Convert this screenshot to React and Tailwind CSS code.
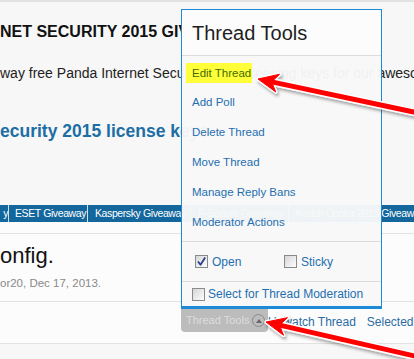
import React from "react";

function CheckBox({ checked }) {
  return (
    <svg width="13" height="13" viewBox="0 0 13 13" className="shrink-0">
      <defs>
        <linearGradient id="cbg" x1="0" y1="0" x2="1" y2="1">
          <stop offset="0" stopColor="#d4d4d4" />
          <stop offset="1" stopColor="#ffffff" />
        </linearGradient>
      </defs>
      <rect x="0.5" y="0.5" width="12" height="12" fill="url(#cbg)" stroke="#8a8a8a" />
      {checked && (
        <path d="M3 6.5 L5.5 9.8 L10.2 2.6" fill="none" stroke="#2b3f8f" strokeWidth="1.8" strokeLinejoin="round" />
      )}
    </svg>
  );
}

function Arrows() {
  return (
    <svg className="absolute inset-0 pointer-events-none" width="414" height="359" viewBox="0 0 414 359">
      <defs>
        <filter id="sh" x="-20%" y="-50%" width="140%" height="200%">
          <feDropShadow dx="1.5" dy="2.5" stdDeviation="1.5" floodColor="#000" floodOpacity="0.35" />
        </filter>
      </defs>
      <g filter="url(#sh)">
        <line x1="271.7" y1="81.9" x2="430" y2="115.5" stroke="#fff" strokeWidth="8" />
        <polygon points="258,79 279.5,74.3 271.7,81.9 275.7,91.9" fill="#fff" stroke="#fff" strokeWidth="3.5" strokeLinejoin="round" />
        <line x1="271.7" y1="81.9" x2="430" y2="115.5" stroke="#f00" strokeWidth="5" />
        <polygon points="258,79 279.5,74.3 271.7,81.9 275.7,91.9" fill="#f00" stroke="#f00" strokeWidth="1" strokeLinejoin="round" />
      </g>
      <g filter="url(#sh)">
        <line x1="279.6" y1="325.1" x2="432" y2="360" stroke="#fff" strokeWidth="8" />
        <polygon points="266,322 287.5,317.7 279.6,325.1 283.5,335.3" fill="#fff" stroke="#fff" strokeWidth="3.5" strokeLinejoin="round" />
        <line x1="279.6" y1="325.1" x2="432" y2="360" stroke="#f00" strokeWidth="5" />
        <polygon points="266,322 287.5,317.7 279.6,325.1 283.5,335.3" fill="#f00" stroke="#f00" strokeWidth="1" strokeLinejoin="round" />
      </g>
    </svg>
  );
}

export default function App() {
  const items = ["Add Poll", "Delete Thread", "Move Thread", "Manage Reply Bans", "Moderator Actions"];
  return (
    <div
      className="relative w-[414px] h-[359px] overflow-hidden bg-[#f7f7f7] whitespace-nowrap"
      style={{ fontFamily: '"Liberation Sans", Arial, sans-serif' }}
    >
      <div className="h-[2px] bg-[#e2e2e2]" />
      <div className="h-[203px] flex flex-col">
        <h1 className="mt-[20px] h-[20px] leading-[20px] text-[16px] font-bold text-[#111]">
          NET SECURITY 2015 GIVEAWAY
        </h1>
        <p className="mt-[22px] h-[18px] leading-[18px] text-[14px] text-[#222]">
          way free Panda Internet Security 2015 licensing keys for our awesome
        </p>
        <h2 className="mt-[38px] h-[22px] leading-[22px] text-[17.5px] font-bold text-[#1c6ea4]">
          ecurity 2015 license keys
        </h2>
      </div>
      <div className="h-[17px] bg-[#13679d] flex text-white text-[10.5px] tracking-[-0.4px] leading-[17px]">
        <div className="w-[8px] overflow-hidden flex justify-end">y</div>
        <div className="w-[79px] pl-[6px] border-l border-[#cfe0ec]">ESET Giveaway</div>
        <div className="w-[103px] pl-[7px] border-l border-[#cfe0ec] overflow-hidden">Kaspersky Giveaway</div>
        <div className="w-[98px] pl-[7px] border-l border-[#cfe0ec] overflow-hidden">F-Secure Giveaway</div>
        <div className="flex-1 pl-[7px] border-l border-[#cfe0ec] overflow-hidden">Kerish Doctor 2015 Giveaway</div>
      </div>
      <div className="bg-[#fcfcfc]">
        <div className="h-[11px]" />
        <div className="h-[68px] border-t border-[#e2e2e2] flex flex-col">
          <div className="mt-[9px] h-[26px] leading-[26px] text-[22px] text-[#111]">onfig.</div>
          <div className="mt-[7px] h-[14px] leading-[14px] text-[11.5px] text-[#8a8a8a]">or20, Dec 17, 2013.</div>
        </div>
        <div className="h-[43px] border-t border-[#e2e2e2] border-b flex items-center pl-[268px] gap-[11px] text-[12px] text-[#2b6ca3] pb-[1px]">
          <span>Unwatch Thread</span>
          <span>Selected Posts</span>
        </div>
      </div>

      {/* Thread Tools popup */}
      <div className="absolute left-[181px] top-[9px] w-[201px]">
        <div className="border border-[#1c8ad6] border-b-[3px] bg-[#f8f8f8]/[0.965]">
          <div className="h-[46px] border-b border-[#dcdcdc] flex items-center pl-[10px] text-[20px] text-[#1e1e1e] bg-[#fcfcfc]/[0.9]">
            Thread Tools
          </div>
          <div className="pt-[2px] pb-[3px] border-b border-[#dcdcdc] text-[11.5px] text-[#1f6fb0]">
            <div className="h-[30px] flex items-center pl-[4px]">
              <span className="h-[20px] leading-[20px] bg-[#ffff3a] pl-[6px] pr-[1px] text-[#3f6b00]">Edit Thread</span>
            </div>
            {items.map((t) => (
              <div key={t} className="h-[30px] flex items-center pl-[10px]">
                {t}
              </div>
            ))}
          </div>
          <div className="h-[40px] border-b border-[#dcdcdc] flex items-center text-[12px] text-[#1f6fb0]">
            <div className="w-[102px] pl-[13px] flex items-center gap-[4px]">
              <CheckBox checked />
              <span>Open</span>
            </div>
            <div className="flex items-center gap-[4px]">
              <CheckBox />
              <span>Sticky</span>
            </div>
          </div>
          <div className="h-[24px] flex items-center pl-[10px] gap-[3px] text-[12px] text-[#1f6fb0]">
            <CheckBox />
            <span>Select for Thread Moderation</span>
          </div>
        </div>
        <div className="w-[87px] h-[23px] bg-[#bcbcbc] rounded-b-[4px] flex items-center pl-[5px] gap-[3px] text-[11px] text-[#dcdcdc]">
          <span>Thread Tools</span>
          <span className="w-[13px] h-[13px] rounded-full border border-[#8a8a8a] flex items-center justify-center">
            <svg width="8" height="6" viewBox="0 0 8 6">
              <polygon points="4,1 7,5 1,5" fill="#666" />
            </svg>
          </span>
        </div>
      </div>

      <Arrows />
    </div>
  );
}
